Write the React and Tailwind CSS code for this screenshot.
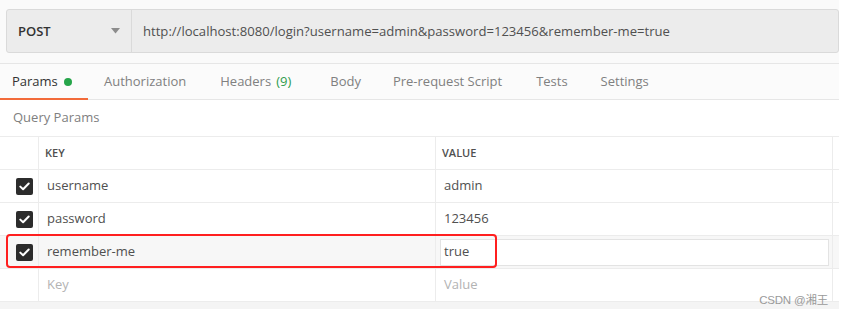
import React from "react";

const font = { fontFamily: '"Open Sans", "Noto Sans", sans-serif' };

function Check() {
  return (
    <div className="w-[17px] h-[17px] rounded-[2px] bg-[#2c2c2c] flex items-center justify-center">
      <svg width="11" height="9" viewBox="0 0 11 9" fill="none">
        <path d="M1.3 4.6 L4.1 7.3 L9.7 1.5" stroke="white" strokeWidth="2" strokeLinecap="round" strokeLinejoin="round" />
      </svg>
    </div>
  );
}

function Row({ k, v, checked, hover, placeholder }) {
  const bg = hover ? "bg-[#f7f7f7]" : "bg-white";
  const border = "border-b border-[#ececec]";
  const txt = placeholder ? "text-[#b3b3b3]" : "text-[#505050]";
  return (
    <>
      <div className={`h-[33px] ${border} ${bg} flex items-center pl-[16px]`}>
        {checked && <Check />}
      </div>
      <div className={`h-[33px] ${border} ${bg} border-l border-[#ececec] flex items-center pl-[8px] text-[13px] ${txt}`}>{k}</div>
      <div className={`h-[33px] ${border} ${bg} border-l border-[#ececec] flex items-center text-[13px] ${txt} ${hover ? "pl-[4px] pr-[3px]" : "pl-[8px]"}`}>
        {hover ? (
          <div className="w-full h-[27px] bg-white border border-[#e3e3e3] flex items-center pl-[3px]">{v}</div>
        ) : (
          v
        )}
      </div>
      <div className={`h-[33px] ${border} ${bg} border-l border-[#ececec]`}></div>
    </>
  );
}

export default function App() {
  return (
    <div className="w-[846px] h-[315px] bg-white relative overflow-hidden" style={font}>
      <div className="w-[839px] bg-[#fafafa]">
        <div className="pt-[9px] pl-[6px] pb-[10px]">
          <div className="h-[44px] bg-[#ececec] border border-[#dadada] rounded-[3px] flex">
            <div className="w-[125px] border-r border-[#dadada] flex items-center justify-between pl-[11px] pr-[11px]">
              <span className="text-[13px] font-semibold text-[#333] mt-[1px]">POST</span>
              <svg width="9" height="6" viewBox="0 0 9 6"><path d="M0 0 L9 0 L4.5 5.5 Z" fill="#8c8c8c" /></svg>
            </div>
            <div className="flex items-center pl-[11px] text-[13.1px] text-[#505050] mt-[1px]">
              http://localhost:8080/login?username=admin&amp;password=123456&amp;remember-me=true
            </div>
          </div>
        </div>
        <div className="h-[37px] border-t border-b border-[#e6e6e6] bg-[#fbfbfb] flex items-stretch text-[13px] text-[#808080]">
          <div className="w-[88px] relative flex items-center pl-[12px] text-[#333]">
            Params
            <span className="ml-[6px] w-[8px] h-[8px] rounded-full bg-[#26a54a] inline-block"></span>
            <div className="absolute left-0 right-0 bottom-[-1px] h-[2px] bg-[#f26b3a]"></div>
          </div>
          <div className="flex items-center pl-[16px]">Authorization</div>
          <div className="flex items-center pl-[34px]">Headers <span className="ml-[5px] text-[#2f9c4e]">(9)</span></div>
          <div className="flex items-center pl-[39px]">Body</div>
          <div className="flex items-center pl-[32px]">Pre-request Script</div>
          <div className="flex items-center pl-[34px]">Tests</div>
          <div className="flex items-center pl-[33px]">Settings</div>
        </div>
      </div>
      <div className="w-[839px] bg-white">
        <div className="h-[36px] flex items-center pl-[13px] text-[13px] text-[#808080]">Query Params</div>
        <div className="grid grid-cols-[38px_397px_397px_7px] border-t border-[#ececec]">
          <div className="h-[33px] border-b border-[#ececec]"></div>
          <div className="h-[33px] border-b border-l border-[#ececec] flex items-center pl-[6px] text-[11px] font-semibold text-[#505050]">KEY</div>
          <div className="h-[33px] border-b border-l border-[#ececec] flex items-center pl-[6px] text-[11px] font-semibold text-[#505050]">VALUE</div>
          <div className="h-[33px] border-b border-l border-[#ececec]"></div>
          <Row k="username" v="admin" checked />
          <Row k="password" v="123456" checked />
          <Row k="remember-me" v="true" checked hover />
          <Row k="Key" v="Value" placeholder />
        </div>
        <div className="h-[7px] bg-[#f4f4f4]"></div>
      </div>
      <div className="absolute left-[6px] top-[234px] w-[491px] h-[34px] border-2 border-[#ff1f1f] rounded-[4px]"></div>
      <div className="absolute right-[18px] top-[292px] text-[11.5px] text-[#9a9a9a] tracking-[-0.2px]" style={{ fontFamily: '"Liberation Sans", "Noto Sans CJK SC", sans-serif' }}>CSDN @湘王</div>
    </div>
  );
}
